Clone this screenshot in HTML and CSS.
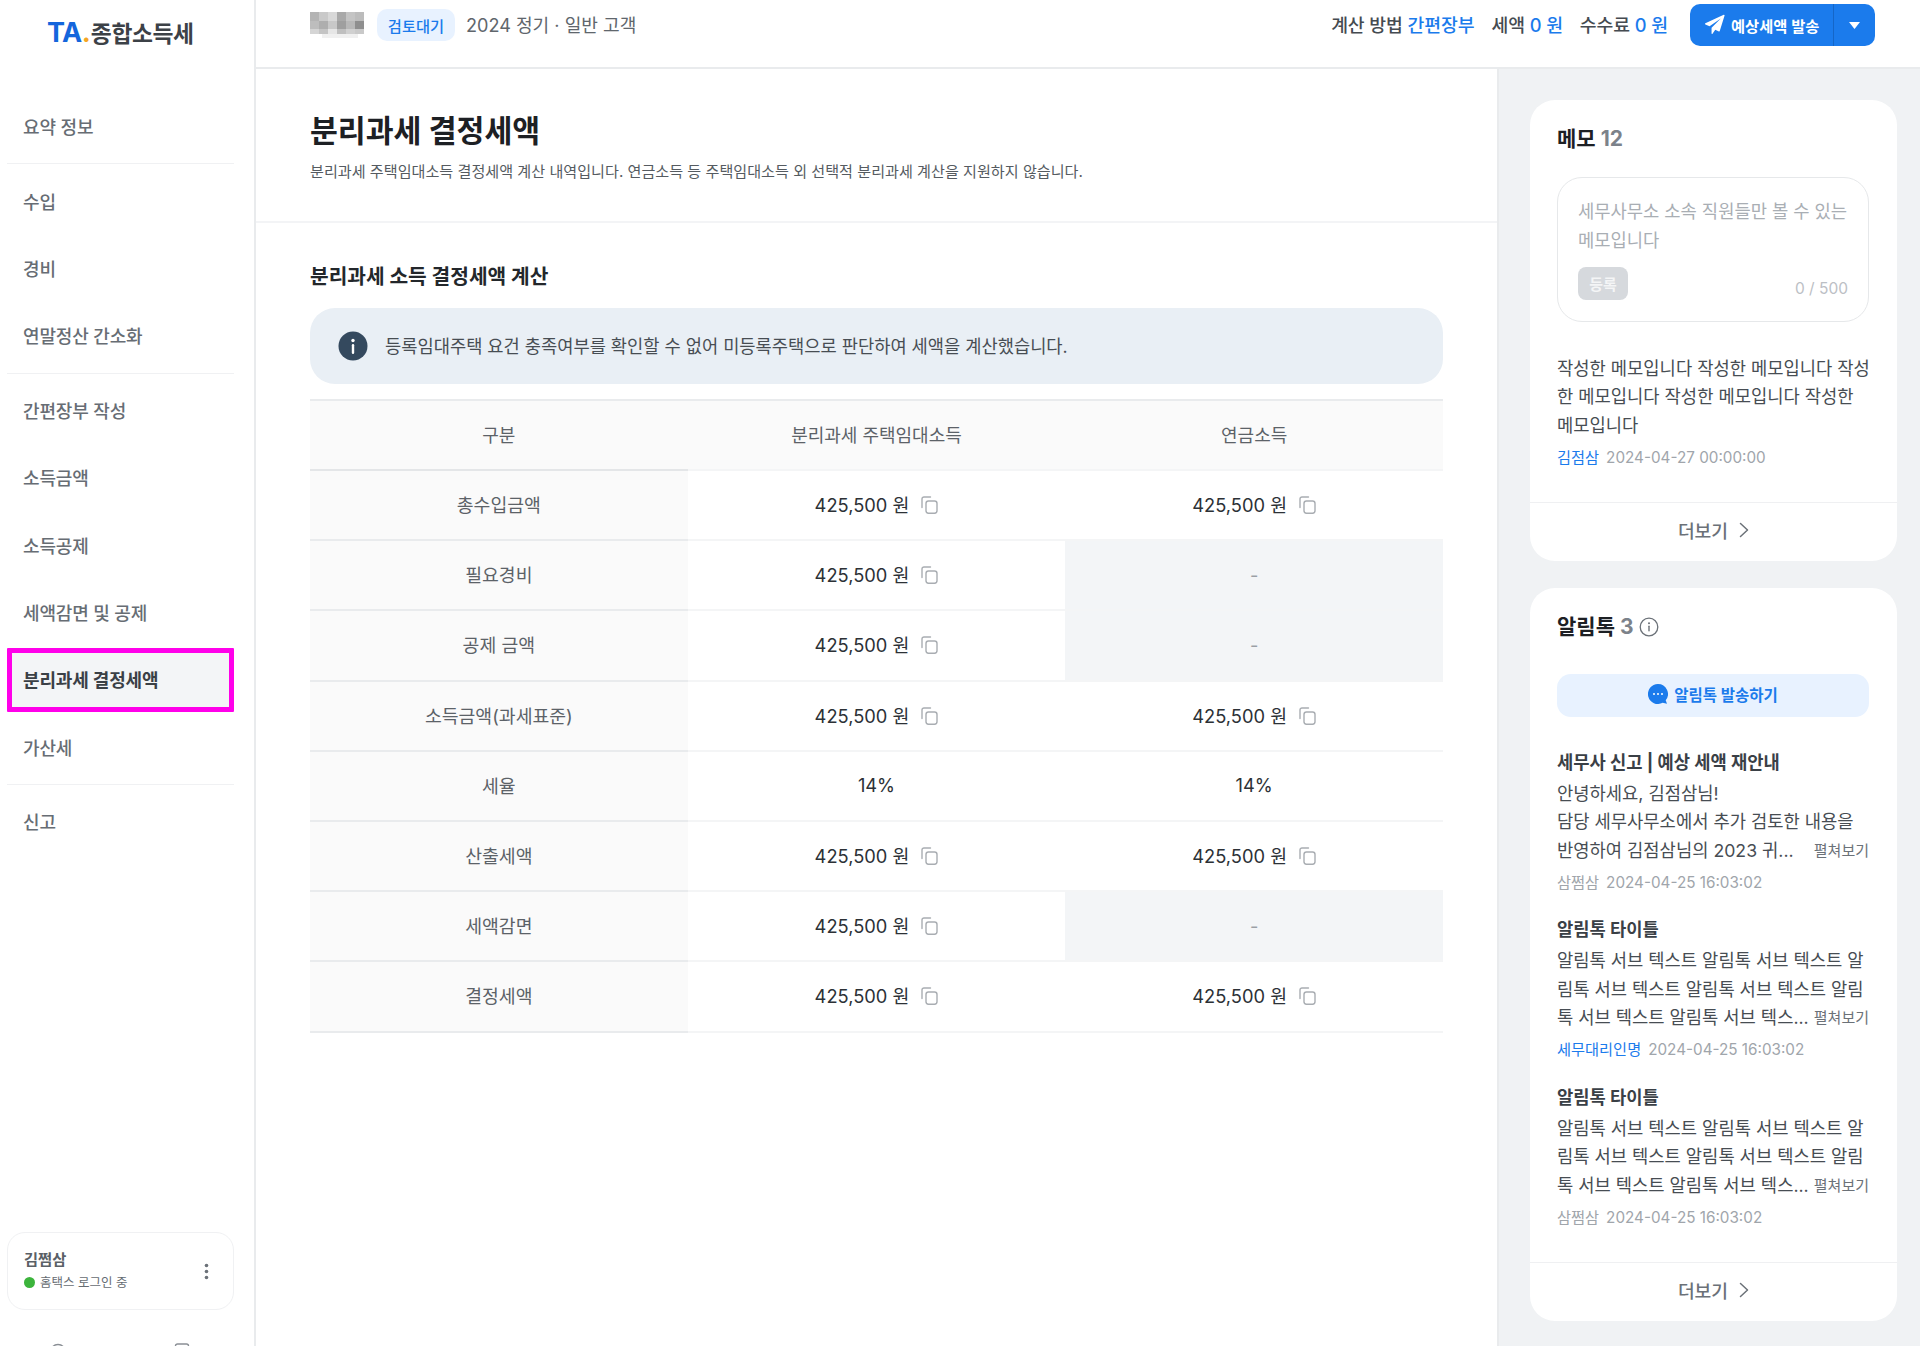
FILE: index.html
```html
<!DOCTYPE html>
<html lang="ko">
<head>
<meta charset="utf-8">
<title>분리과세 결정세액</title>
<link rel="stylesheet" href="styles.css">
</head>
<body>
<svg class="defs" width="0" height="0" aria-hidden="true">
  <symbol id="copy" viewBox="0 0 18 18">
    <path d="M2 11.5V3a2 2 0 0 1 2-2h6.5" fill="none" stroke="#a9adb2" stroke-width="1.4" stroke-linecap="round"/>
    <rect x="6" y="5" width="11" height="12.2" rx="2.4" fill="none" stroke="#a9adb2" stroke-width="1.4"/>
  </symbol>
  <symbol id="chev" viewBox="0 0 10 16">
    <path d="M1.5 1.5 8.5 8l-7 6.5" fill="none" stroke="#6b7178" stroke-width="1.5" stroke-linecap="round" stroke-linejoin="round"/>
  </symbol>
</svg>
<div class="app">
  <aside class="sidebar">
    <div class="logo"><span class="logo-ta">TA</span><span class="logo-dot">.</span><span class="logo-name">종합소득세</span></div>
    <nav class="nav">
      <div class="nav-group"><a class="nav-item">요약 정보</a></div>
      <div class="nav-group">
        <a class="nav-item">수입</a>
        <a class="nav-item">경비</a>
        <a class="nav-item">연말정산 간소화</a>
      </div>
      <div class="nav-group">
        <a class="nav-item">간편장부 작성</a>
        <a class="nav-item">소득금액</a>
        <a class="nav-item">소득공제</a>
        <a class="nav-item">세액감면 및 공제</a>
        <a class="nav-item nav-active">분리과세 결정세액</a>
        <a class="nav-item">가산세</a>
      </div>
      <div class="nav-group"><a class="nav-item">신고</a></div>
    </nav>
    <div class="profile">
      <div class="profile-info">
        <div class="profile-name">김쩜삼</div>
        <div class="profile-status"><i class="dot"></i>홈택스 로그인 중</div>
      </div>
      <svg class="kebab" width="5" height="17" viewBox="0 0 5 17"><circle cx="2.5" cy="2.5" r="1.8" fill="#6b7178"/><circle cx="2.5" cy="8.5" r="1.8" fill="#6b7178"/><circle cx="2.5" cy="14.5" r="1.8" fill="#6b7178"/></svg>
    </div>
    <div class="side-foot">
      <svg width="18" height="18" viewBox="0 0 18 18"><circle cx="9" cy="9" r="7.5" fill="none" stroke="#8a8f95" stroke-width="1.4"/></svg>
      <svg width="16" height="18" viewBox="0 0 16 18"><rect x="1.5" y="1" width="13" height="15" rx="2" fill="none" stroke="#8a8f95" stroke-width="1.4"/></svg>
    </div>
  </aside>
  <div class="content">
    <header class="topbar">
      <div class="top-left">
        <svg class="mosaic" width="54" height="26" viewBox="0 0 54 26" aria-hidden="true">
          <rect width="54" height="26" fill="#fff"/>
          <rect x="0" y="0" width="9" height="9" fill="#b4b4b4"/><rect x="9" y="0" width="9" height="9" fill="#c9c9c9"/><rect x="18" y="0" width="9" height="9" fill="#d8d8d8"/><rect x="27" y="0" width="9" height="9" fill="#a9a9a9"/><rect x="36" y="0" width="9" height="9" fill="#c4c4c4"/><rect x="45" y="0" width="9" height="9" fill="#bcbcbc"/>
          <rect x="0" y="9" width="9" height="8" fill="#bdbdbd"/><rect x="9" y="9" width="9" height="8" fill="#aeaeae"/><rect x="18" y="9" width="9" height="8" fill="#c8c8c8"/><rect x="27" y="9" width="9" height="8" fill="#9f9f9f"/><rect x="36" y="9" width="9" height="8" fill="#b8b8b8"/><rect x="45" y="9" width="9" height="8" fill="#8f8f8f"/>
          <rect x="0" y="17" width="9" height="5" fill="#d5d5d5"/><rect x="9" y="17" width="9" height="5" fill="#c4c4c4"/><rect x="18" y="17" width="9" height="5" fill="#e6e6e6"/><rect x="27" y="17" width="9" height="5" fill="#bfbfbf"/><rect x="36" y="17" width="9" height="5" fill="#d0d0d0"/><rect x="45" y="17" width="9" height="5" fill="#c9c9c9"/>
          <rect x="12" y="22" width="36" height="4" fill="#f0f0f0"/>
        </svg>
        <span class="badge">검토대기</span>
        <span class="top-desc">2024 정기 · 일반 고객</span>
      </div>
      <div class="top-right">
        <span class="stat">계산 방법 <b>간편장부</b></span>
        <span class="stat">세액 <b>0 원</b></span>
        <span class="stat">수수료 <b>0 원</b></span>
        <div class="send">
          <span class="send-main">
            <svg width="21" height="21" viewBox="0 0 20 20"><path d="M18.800.8a.6.6 0 0 1 .8.7L15 16.200a.6.6 0 0 1-.8.4l-3.500-1.500-2.600 3.700a.5.500 0 0 1-.9-.3v-5.300L16 4.200 5.300 11.600l-4-1.700a.6.6 0 0 1 0-1.100z" fill="#fff"/></svg>
            예상세액 발송
          </span>
          <span class="send-caret"><svg width="11" height="7" viewBox="0 0 11 7"><path d="M0 0h11L5.500 7z" fill="#fff"/></svg></span>
        </div>
      </div>
    </header>
    <div class="body">
      <main class="main">
        <section class="page-head">
          <h1>분리과세 결정세액</h1>
          <p>분리과세 주택임대소득 결정세액 계산 내역입니다. 연금소득 등 주택임대소득 외 선택적 분리과세 계산을 지원하지 않습니다.</p>
        </section>
        <section class="calc">
          <h2>분리과세 소득 결정세액 계산</h2>
          <div class="alert">
            <svg width="30" height="30" viewBox="0 0 30 30"><circle cx="15" cy="15" r="14.500" fill="#34495e"/><circle cx="15" cy="9.500" r="1.700" fill="#fff"/><rect x="13.800" y="13" width="2.400" height="10" rx="1.200" fill="#fff"/></svg>
            <span>등록임대주택 요건 충족여부를 확인할 수 없어 미등록주택으로 판단하여 세액을 계산했습니다.</span>
          </div>
          <table class="tbl">
            <thead>
              <tr><th>구분</th><th>분리과세 주택임대소득</th><th>연금소득</th></tr>
            </thead>
            <tbody>
              <tr><th>총수입금액</th><td><span class="val">425,500 원<svg class="cp"><use href="#copy"/></svg></span></td><td><span class="val">425,500 원<svg class="cp"><use href="#copy"/></svg></span></td></tr>
              <tr><th>필요경비</th><td><span class="val">425,500 원<svg class="cp"><use href="#copy"/></svg></span></td><td class="none">-</td></tr>
              <tr><th>공제 금액</th><td><span class="val">425,500 원<svg class="cp"><use href="#copy"/></svg></span></td><td class="none">-</td></tr>
              <tr><th>소득금액(과세표준)</th><td><span class="val">425,500 원<svg class="cp"><use href="#copy"/></svg></span></td><td><span class="val">425,500 원<svg class="cp"><use href="#copy"/></svg></span></td></tr>
              <tr><th>세율</th><td>14%</td><td>14%</td></tr>
              <tr><th>산출세액</th><td><span class="val">425,500 원<svg class="cp"><use href="#copy"/></svg></span></td><td><span class="val">425,500 원<svg class="cp"><use href="#copy"/></svg></span></td></tr>
              <tr><th>세액감면</th><td><span class="val">425,500 원<svg class="cp"><use href="#copy"/></svg></span></td><td class="none">-</td></tr>
              <tr><th>결정세액</th><td><span class="val">425,500 원<svg class="cp"><use href="#copy"/></svg></span></td><td><span class="val">425,500 원<svg class="cp"><use href="#copy"/></svg></span></td></tr>
            </tbody>
          </table>
        </section>
      </main>
      <aside class="panel">
        <section class="card">
          <div class="card-body memo-body">
            <h3>메모 <em>12</em></h3>
            <div class="memo-input">
              <div class="placeholder">세무사무소 소속 직원들만 볼 수 있는 메모입니다</div>
              <div class="memo-actions"><span class="reg">등록</span><span class="count">0 / 500</span></div>
            </div>
            <p class="msg">작성한 메모입니다 작성한 메모입니다 작성<br>한 메모입니다 작성한 메모입니다 작성한<br>메모입니다</p>
            <div class="meta"><span class="who">김점삼</span><span>2024-04-27 00:00:00</span></div>
          </div>
          <div class="more">더보기<svg width="10" height="16"><use href="#chev"/></svg></div>
        </section>
        <section class="card">
          <div class="card-body talk-body">
            <h3>알림톡 <em>3</em>
              <svg class="info" width="20" height="20" viewBox="0 0 20 20"><circle cx="10" cy="10" r="8.800" fill="none" stroke="#6b7178" stroke-width="1.300"/><circle cx="10" cy="6.300" r="1" fill="#6b7178"/><rect x="9.300" y="8.500" width="1.400" height="6" rx=".7" fill="#6b7178"/></svg>
            </h3>
            <div class="talk-btn">
              <svg width="20" height="20" viewBox="0 0 20 20"><path d="M10 0a10 10 0 1 0 4.700 18.800l4.300 1-1.300-3.500A10 10 0 0 0 10 0z" fill="#1b7bec"/><circle cx="6" cy="10" r="1" fill="#fff"/><circle cx="10" cy="10" r="1" fill="#fff"/><circle cx="14" cy="10" r="1" fill="#fff"/></svg>
              알림톡 발송하기
            </div>
            <article class="talk">
              <h4>세무사 신고 | 예상 세액 재안내</h4>
              <div class="talk-text">안녕하세요, 김점삼님!<br>담당 세무사무소에서 추가 검토한 내용을</div>
              <div class="talk-last"><span>반영하여 김점삼님의 2023 귀...</span><small>펼쳐보기</small></div>
              <div class="meta"><span>삼쩜삼</span><span>2024-04-25 16:03:02</span></div>
            </article>
            <article class="talk">
              <h4>알림톡 타이틀</h4>
              <div class="talk-text">알림톡 서브 텍스트 알림톡 서브 텍스트 알<br>림톡 서브 텍스트 알림톡 서브 텍스트 알림</div>
              <div class="talk-last"><span>톡 서브 텍스트 알림톡 서브 텍스...</span><small>펼쳐보기</small></div>
              <div class="meta"><span class="who">세무대리인명</span><span>2024-04-25 16:03:02</span></div>
            </article>
            <article class="talk">
              <h4>알림톡 타이틀</h4>
              <div class="talk-text">알림톡 서브 텍스트 알림톡 서브 텍스트 알<br>림톡 서브 텍스트 알림톡 서브 텍스트 알림</div>
              <div class="talk-last"><span>톡 서브 텍스트 알림톡 서브 텍스...</span><small>펼쳐보기</small></div>
              <div class="meta"><span>삼쩜삼</span><span>2024-04-25 16:03:02</span></div>
            </article>
          </div>
          <div class="more">더보기<svg width="10" height="16"><use href="#chev"/></svg></div>
        </section>
      </aside>
    </div>
  </div>
</div>
</body>
</html>
```
FILE: styles.css
```css
* { box-sizing: border-box; }
html, body { margin: 0; height: 100%; overflow: hidden; }
body {
  font-family: Inter, "Noto Sans CJK KR", sans-serif;
  color: #333a40;
  background: #fff;
  font-size: 17.5px;
}
.defs { position: absolute; }
.app { display: flex; height: 1346px; }

/* sidebar */
.sidebar {
  width: 256px;
  flex: none;
  border-right: 2px solid #e9ebed;
  display: flex;
  flex-direction: column;
  overflow: hidden;
}
.logo {
  height: 66px;
  padding: 0 0 2px 47px;
  display: flex;
  align-items: center;
  font-weight: 700;
}
.logo-ta { color: #1466dc; font-size: 27px; letter-spacing: -.5px; }
.logo-dot { color: #f5a623; font-size: 27px; }
.logo-name { color: #3c4147; font-size: 22.800px; letter-spacing: -.4px; }
.nav { padding-top: 27px; }
.nav-group { padding: 0 0 3.200px; margin: 0 20px 3.200px 7px; border-bottom: 1px solid #f0f1f3; }
.nav-group:last-child { border-bottom: 0; }
.nav-item {
  display: flex;
  align-items: center;
  height: 67.300px;
  padding: 0 0 1px 16px;
  font-size: 18px;
  font-weight: 500;
  color: #676d74;
  letter-spacing: -.15px;
}
.nav-active {
  color: #3a4046;
  font-weight: 700;
  background: #f3f5f7;
  height: 64px;
  margin: 1.500px 0 1.800px;
  padding-left: 11px;
  border: 5px solid #ff00ea;
  border-radius: 1px;
}
.profile {
  margin: auto 0 0 7px;
  width: 227px;
  height: 78px;
  flex: none;
  border: 1px solid #f0f1f3;
  border-radius: 18px;
  padding: 0 16px;
  display: flex;
  align-items: center;
  justify-content: space-between;
}
.profile-name { font-size: 15.300px; font-weight: 600; color: #5a6066; line-height: 23px; }
.profile-status { font-size: 12.500px; color: #666c72; display: flex; align-items: center; gap: 5px; line-height: 23px; }
.dot { width: 11px; height: 11px; border-radius: 50%; background: #3cb43c; }
.kebab { margin-right: 8px; }
.side-foot {
  flex: none;
  height: 36px;
  margin-top: 33px;
  margin-bottom: -33px;
  padding: 0 64px 0 49px;
  display: flex;
  justify-content: space-between;
}

/* layout */
.content { flex: 1; display: flex; flex-direction: column; min-width: 0; }
.topbar {
  height: 69px;
  flex: none;
  border-bottom: 2px solid #e9ebed;
  padding: 0 45px 17px 54px;
  display: flex;
  justify-content: space-between;
  align-items: center;
}
.top-left, .top-right { display: flex; align-items: center; }
.mosaic { margin-right: 13px; filter: blur(.6px); }
.badge {
  width: 78px;
  height: 32px;
  border-radius: 10px;
  background: #e8f2ff;
  color: #1b7bec;
  font-size: 15.300px;
  font-weight: 500;
  display: flex;
  align-items: center;
  justify-content: center;
  margin-right: 11px;
  padding-bottom: 1px;
}
.top-desc { font-size: 18.100px; color: #60666c; padding-bottom: 2px; }
.top-right { gap: 17px; }
.stat { font-size: 18.300px; font-weight: 500; color: #454b51; letter-spacing: -.1px; padding-bottom: 2px; }
.stat b { color: #1b7bec; font-weight: 500; }
.send {
  margin-left: 5px;
  height: 42px;
  width: 185px;
  border-radius: 10px;
  background: #1b7bec;
  color: #fff;
  display: flex;
  font-size: 15.300px;
  font-weight: 600;
}
.send-main {
  flex: 1;
  display: flex;
  align-items: center;
  gap: 6px;
  padding: 0 0 1px 14px;
  border-right: 1px solid #1566c7;
}
.send-caret { width: 41px; display: flex; align-items: center; justify-content: center; }
.body { flex: 1; display: flex; min-height: 0; }
.main { flex: 1; min-width: 0; }
.page-head {
  height: 154px;
  padding: 40px 54px 0;
  border-bottom: 2px solid #f3f4f6;
}
h1 { margin: 0; font-size: 30.300px; line-height: 44px; font-weight: 700; color: #1d2024; }
.page-head p { margin: 8px 0 0; font-size: 15.120px; line-height: 22px; color: #555b61; }
.calc { padding: 38px 54px 0 54px; }
h2 { margin: 0; font-size: 20.300px; line-height: 32px; font-weight: 700; color: #23272b; }
.alert {
  margin-top: 15px;
  height: 76px;
  border-radius: 25px;
  background: #e9eff5;
  display: flex;
  align-items: center;
  gap: 17px;
  padding-left: 28px;
  font-size: 17.650px;
  color: #474d53;
}
.alert span { padding-bottom: 2px; }
.tbl {
  margin-top: 15px;
  width: 100%;
  border-collapse: separate;
  border-spacing: 0;
  table-layout: fixed;
  border-top: 2px solid #e9ebed;
  font-size: 18.300px;
}
.tbl th, .tbl td {
  height: 70.200px;
  padding: 0 0 2px;
  text-align: center;
  vertical-align: middle;
  font-weight: 400;
  border-bottom: 2px solid #f4f5f6;
}
.tbl th { color: #5c6268; }
.tbl tbody th { background: #fafafa; border-bottom-color: #e9ebed; }
.tbl thead th { background: #fafafa; height: 70px; color: #5c6268; font-size: 18px; }
.tbl thead th:first-child { border-bottom-color: #e4e6e8; }
.tbl td { color: #2c3136; font-weight: 400; }
.tbl td.none { background: #f3f5f7; color: #9a9fa5; padding-bottom: 0; }
.val { display: inline-flex; align-items: center; gap: 11px; }
.cp { width: 18px; height: 18px; margin-top: 2px; }

/* right panel */
.panel {
  width: 423px;
  flex: none;
  background: #f0f2f4;
  border-left: 2px solid #e9ebed;
  padding: 31px 23px 0 31px;
  display: flex;
  flex-direction: column;
  gap: 27px;
}
.card { background: #fff; border-radius: 25px; display: flex; flex-direction: column; }
.card-body { padding: 0 28px 0 27px; }
.memo-body { height: 402px; padding-top: 24px; }
.talk-body { padding-top: 24px; height: 674px; }
h3 { margin: 0; font-size: 21px; line-height: 30px; font-weight: 700; color: #1d2024; display: flex; align-items: center; gap: 5px; }
h3 em { font-style: normal; font-weight: 700; color: #7c828a; }
.memo-input {
  margin-top: 23px;
  height: 145px;
  border: 1.500px solid #e6e8ea;
  border-radius: 25px;
  padding: 20px 20px 0;
}
.placeholder { font-size: 17.700px; line-height: 28.500px; color: #a9aeb4; }
.memo-actions { display: flex; justify-content: space-between; align-items: center; margin-top: 12px; }
.reg {
  width: 50px;
  height: 33px;
  border-radius: 8px;
  background: #d6d9dd;
  color: #f4f5f6;
  font-size: 15px;
  font-weight: 600;
  display: flex;
  align-items: center;
  justify-content: center;
}
.count { font-size: 15.500px; color: #bcc0c5; padding-top: 9px; }
.msg { margin: 32.500px 0 0; font-size: 17.700px; line-height: 28.500px; color: #474d53; white-space: nowrap; }
.meta { display: flex; gap: 7px; font-size: 15.250px; line-height: 22px; color: #a0a5ab; margin-top: 6.500px; }
.who { color: #1b7bec; }
.more {
  height: 59px;
  border-top: 1.500px solid #eff0f2;
  padding-bottom: 4px;
  display: flex;
  align-items: center;
  justify-content: center;
  gap: 11px;
  font-size: 18.200px;
  font-weight: 500;
  color: #6b7178;
}
.talk-btn {
  margin-top: 31.500px;
  height: 43px;
  border-radius: 14px;
  background: #e8f2ff;
  color: #1b7bec;
  font-size: 15.500px;
  font-weight: 600;
  display: flex;
  align-items: center;
  justify-content: center;
  gap: 6px;
  padding-bottom: 2px;
}
.talk { margin-top: 31px; }
.talk + .talk { margin-top: 21.500px; }
h4 { margin: 0 0 3px; font-size: 17.700px; line-height: 29px; font-weight: 700; color: #3a4046; }
.talk-text, .talk-last { font-size: 17.700px; line-height: 28.500px; color: #474d53; white-space: nowrap; }
.talk-last { display: flex; justify-content: space-between; align-items: center; }
.talk-last small { font-size: 15px; color: #6b7178; }
```
